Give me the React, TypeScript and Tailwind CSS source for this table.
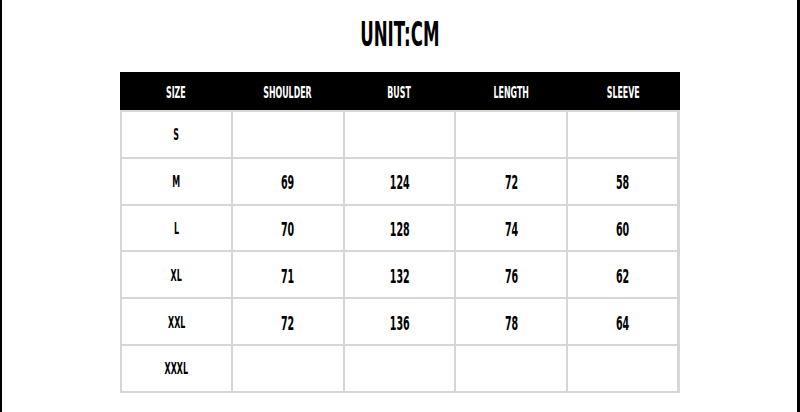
const font = { fontFamily: '"DejaVu Sans Condensed", "Liberation Sans Narrow", "Liberation Sans", sans-serif' };

const headers = ['SIZE', 'SHOULDER', 'BUST', 'LENGTH', 'SLEEVE'];

const rows: [string, string, string, string, string][] = [
  ['S', '', '', '', ''],
  ['M', '69', '124', '72', '58'],
  ['L', '70', '128', '74', '60'],
  ['XL', '71', '132', '76', '62'],
  ['XXL', '72', '136', '78', '64'],
  ['XXXL', '', '', '', ''],
];

export default function App() {
  return (
    <div
      className="w-[800px] h-[412px] bg-white border-l-2 border-r-[3px] border-black flex flex-col items-center"
      style={font}
    >
      <h1 className="mt-[16px] h-[38px] text-[33px] leading-[38px] font-bold text-black scale-x-[0.56]">
        UNIT:CM
      </h1>
      <div className="mt-[18px] w-[560px]">
        <div className="grid grid-cols-5 h-[38px] bg-black text-white">
          {headers.map((h) => (
            <div key={h} className="flex items-center justify-center text-[15px] font-bold pt-[5px]">
              <span className="scale-x-[0.585]">{h}</span>
            </div>
          ))}
        </div>
        <div className="grid grid-cols-5 gap-[2px] bg-[#d6d6d6] p-[2px] pt-0 border-t-2 border-[#d6d6d6]">
          {rows.map((row) =>
            row.map((cell, i) => (
              <div key={row[0] + i} className="h-[44.8px] bg-white flex items-center justify-center text-black font-bold pt-[2px]">
                <span className={i === 0 ? 'text-[16px] scale-x-[0.55]' : 'text-[20px] scale-x-[0.53]'}>{cell}</span>
              </div>
            ))
          )}
        </div>
      </div>
    </div>
  );
}
